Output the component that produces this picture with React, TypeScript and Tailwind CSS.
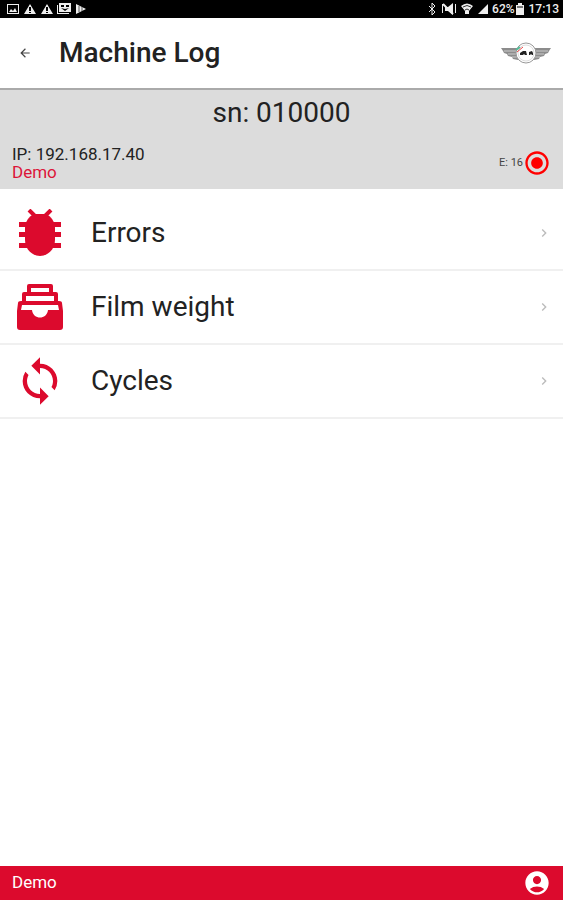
import type { ReactNode } from "react";
import { MdAccountCircle, MdArrowBack, MdChevronRight, MdRadioButtonChecked, MdSync } from "react-icons/md";

function BugIcon() {
  return (
    <svg viewBox="0 0 48 48" className="size-12 fill-current">
      <path d="M18 5h12c5 2 9 8 9 14v12c0 10-8 16-15 16S9 41 9 31V19c0-6 4-12 9-14z" />
      <path d="M3 13h42v5H3zM3 23h42v5H3zM3 34h42v5H3z" />
      <path d="M13 1l6 6M35 1l-6 6" stroke="currentColor" strokeWidth="4" />
    </svg>
  );
}

function DrawerIcon() {
  return (
    <svg viewBox="0 0 48 48" className="size-12 fill-current" fillRule="evenodd">
      <path d="M13 1h22q2 0 2 2v6h3q2 0 2 2v7h1q3 0 3 2l1 8v16q0 3-3 3H4q-3 0-3-3V28l1-8q0-2 3-2h1v-7q0-2 2-2h3V3q0-2 2-2zM15 5v4h18V5zM10 13v5h28v-5zM6 22l-1 5h11c1 10 15 10 16 0h11l-1-5z" />
    </svg>
  );
}

function WingsLogo() {
  return (
    <svg viewBox="0 0 52 24" className="h-6 w-13">
      <path d="M1 7h17v12l-5-1-1-2-4-1-1-2-3-1-1-2z" fill="#8c8c8c" />
      <path d="M51 7H34v12l5-1 1-2 4-1 1-2 3-1 1-2z" fill="#8c8c8c" />
      <path d="M4 10h14M8 13h10M12 16h6M48 10H34M44 13H34M40 16h-6" stroke="#ccc" />
      <circle cx="26" cy="12" r="10" fill="#fff" stroke="#999" />
      <circle cx="26" cy="12" r="8" fill="#fff" stroke="#ddd" />
      <path d="M16 9l4-3" stroke="#5b9" strokeWidth="2" />
      <path d="M17 11l6-5" stroke="#e44" />
      <path d="M20 14v-2l3-2h3l1 4h-2l-1-1-1 1zM29 14v-3l3-1 1 2v2h-1l-1-1-1 1z" fill="#222" />
    </svg>
  );
}

function StatusBar() {
  return (
    <div className="flex h-[18px] items-center justify-between bg-black pr-1 pl-[6px] text-xs font-medium text-[#eee]">
      <svg viewBox="0 0 82 14" className="h-[14px] w-[82px]" fill="#eee">
        <path fillRule="evenodd" d="M1 2h12v10H1zM2 3v8h10V3z" />
        <path d="M3 10l2-3 2 2 2-3 2 4z" />
        <path fillRule="evenodd" d="M24 2l6 10H18zM23 5v4h2V5zm0 5v1h2v-1z" />
        <path fillRule="evenodd" d="M41 2l6 10H35zM40 5v4h2V5zm0 5v1h2v-1z" />
        <path fillRule="evenodd" d="M53 1h12v9H53zM55 3v2h3V3zm5 0v2h3V3zM55 6l4 3 4-3-4 1z" />
        <path d="M51 3h1v8h11v1H51z" />
        <path d="M70 2l10 5-10 5z" />
        <path d="M73 4v6M76 5v4" stroke="#555" />
      </svg>
      <div className="flex items-center">
        <svg viewBox="0 0 64 14" className="h-[14px] w-[64px]" fill="#eee">
          <path d="M1 4l6 6-3 3V1l3 3-6 6" fill="none" stroke="#eee" />
          <path d="M17 5h3l5-4v12l-5-4h-3zM14 2h1v9h-1zM27 2h1v9h-1z" />
          <path d="M15 2l10 10" stroke="#eee" strokeWidth="2" />
          <path d="M33 4q6-5 12 0l-4 5v3h-4V9z" />
          <path d="M35 5q4-3 8 0M37 8q2-2 4 0" fill="none" stroke="#333" />
          <path d="M50 12L60 2v10z" />
        </svg>
        <span>62%</span>
        <svg viewBox="0 0 10 12" className="mr-1 h-3 w-[10px]" fill="#eee">
          <path d="M3 0h4v2h2v10H1V2h2z" />
          <path d="M2 3h6v2H2z" fill="#777" />
        </svg>
        <span>17:13</span>
      </div>
    </div>
  );
}

const rows: { label: string; icon: ReactNode }[] = [
  { label: "Errors", icon: <BugIcon /> },
  { label: "Film weight", icon: <DrawerIcon /> },
  { label: "Cycles", icon: <MdSync size={52} className="shrink-0" /> },
];

export default function App() {
  return (
    <div className="flex min-h-screen flex-col bg-white font-[Roboto,sans-serif] text-[#222]">
      <StatusBar />
      <header className="flex h-[72px] items-center border-b-2 border-[#aaa] pr-[11px] pl-[18px]">
        <button aria-label="Back" className="text-[#444]">
          <MdArrowBack size={14} />
        </button>
        <h1 className="ml-[27px] flex-1 text-[28px] font-medium">Machine Log</h1>
        <WingsLogo />
      </header>

      <section className="bg-[#dcdcdc] px-3 pb-2">
        <h2 className="pt-1 text-center text-[28px] leading-[38px]">sn: 010000</h2>
        <div className="mt-[13px] flex items-center justify-between">
          <div className="text-[17px] leading-[18px]">
            <p>IP: 192.168.17.40</p>
            <p className="text-[#dc1439]">Demo</p>
          </div>
          <div className="flex items-center text-[11px] text-[#444]">
            <span>E: 16</span>
            <MdRadioButtonChecked size={28} className="text-[#f00]" />
          </div>
        </div>
      </section>

      <nav className="flex-1 pt-2">
        {rows.map((row) => (
          <a key={row.label} href="#" className="flex h-[74px] items-center border-b-2 border-[#f0f0f0] pr-[11px] pl-4">
            <span className="flex w-12 justify-center text-[#dc0a2d]">{row.icon}</span>
            <span className="ml-[27px] flex-1 text-[28px]">{row.label}</span>
            <MdChevronRight size={16} className="text-[#bbb]" />
          </a>
        ))}
      </nav>

      <footer className="flex h-[34px] items-center justify-between bg-[#dc0a2d] px-3 text-[17px] text-white">
        <span>Demo</span>
        <button aria-label="Account">
          <MdAccountCircle size={28} />
        </button>
      </footer>
    </div>
  );
}
